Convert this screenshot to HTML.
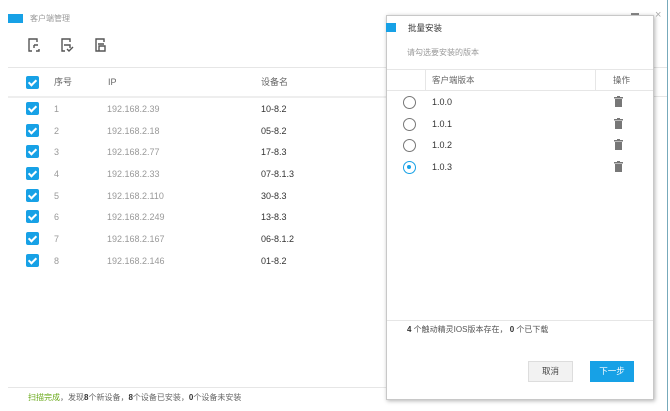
<!DOCTYPE html>
<html><head><meta charset="utf-8"><style>
*{margin:0;padding:0;box-sizing:border-box}
body{width:670px;height:411px;background:#fff;position:relative;overflow:hidden;font-family:"Liberation Sans","Noto Sans CJK SC",sans-serif;font-size:9px;color:#333}
.a{position:absolute;white-space:nowrap;line-height:12px}
.cb{position:absolute;left:26px;width:13px;height:13px;background:#17a1e6;border-radius:2px}
.cb:after{content:"";position:absolute;left:4px;top:2px;width:3px;height:6px;border:solid #fff;border-width:0 2px 2px 0;transform:rotate(45deg)}
.g{color:#999}
.hl{position:absolute;height:1px;background:#e6e6e6}
.rd{position:absolute;left:403px;width:13px;height:13px;border:1.5px solid #777;border-radius:50%}
.tr{position:absolute;left:614px;width:9px;height:11px}
</style></head><body>
<div style="position:absolute;left:8px;top:14px;width:15px;height:9px;background:#17a1e6"></div>
<div class="a g" style="left:30px;top:13px;font-size:8px">客户端管理</div>
<svg class="a" style="left:27px;top:37px" width="90" height="16" viewBox="0 0 90 16" fill="none" stroke="#555" stroke-width="1.4">
<path d="M5 14H2V2h8v3M7 8h4M7 8v3M12 12v2H9"/>
<path d="M38 14h-3V2h8v3M37 8h6v3M40 12l2 2 4-4"/>
<path d="M72 14h-3V2h8v3M71 7h6M72 9h6v5h-6z"/>
</svg>
<div class="hl" style="left:8px;top:67px;width:378px"></div>
<div class="cb" style="top:76px"></div>
<div class="a" style="left:54px;top:76px;color:#666">序号</div>
<div class="a" style="left:108px;top:76px;color:#666">IP</div>
<div class="a" style="left:261px;top:76px;color:#666">设备名</div>
<div class="hl" style="left:8px;top:96px;width:378px;background:#eee;height:2px"></div>

<div class="cb" style="top:102px"></div><div class="a g" style="left:54px;top:103px">1</div><div class="a g" style="left:107px;top:103px">192.168.2.39</div><div class="a" style="left:261px;top:103px">10-8.2</div>
<div class="cb" style="top:124px"></div><div class="a g" style="left:54px;top:125px">2</div><div class="a g" style="left:107px;top:125px">192.168.2.18</div><div class="a" style="left:261px;top:125px">05-8.2</div>
<div class="cb" style="top:145px"></div><div class="a g" style="left:54px;top:146px">3</div><div class="a g" style="left:107px;top:146px">192.168.2.77</div><div class="a" style="left:261px;top:146px">17-8.3</div>
<div class="cb" style="top:167px"></div><div class="a g" style="left:54px;top:168px">4</div><div class="a g" style="left:107px;top:168px">192.168.2.33</div><div class="a" style="left:261px;top:168px">07-8.1.3</div>
<div class="cb" style="top:189px"></div><div class="a g" style="left:54px;top:190px">5</div><div class="a g" style="left:107px;top:190px">192.168.2.110</div><div class="a" style="left:261px;top:190px">30-8.3</div>
<div class="cb" style="top:210px"></div><div class="a g" style="left:54px;top:211px">6</div><div class="a g" style="left:107px;top:211px">192.168.2.249</div><div class="a" style="left:261px;top:211px">13-8.3</div>
<div class="cb" style="top:232px"></div><div class="a g" style="left:54px;top:233px">7</div><div class="a g" style="left:107px;top:233px">192.168.2.167</div><div class="a" style="left:261px;top:233px">06-8.1.2</div>
<div class="cb" style="top:254px"></div><div class="a g" style="left:54px;top:255px">8</div><div class="a g" style="left:107px;top:255px">192.168.2.146</div><div class="a" style="left:261px;top:255px">01-8.2</div>

<div class="hl" style="left:8px;top:387px;width:378px"></div>
<div class="a" style="left:28px;top:392px;font-size:8px;color:#666"><span style="color:#6aaa1a">扫描完成</span>，发现<b style="color:#333">8</b>个新设备，<b style="color:#333">8</b>个设备已安装，<b style="color:#333">0</b>个设备未安装</div>

<div style="position:absolute;left:631px;top:13px;width:8px;height:2px;background:#888"></div>
<div class="a" style="left:655px;top:9px;font-size:11px;color:#aaa">×</div>
<div style="position:absolute;left:667px;top:0;width:1px;height:411px;background:#7ab"></div>
<div class="hl" style="left:653px;top:67px;width:14px"></div>
<div class="hl" style="left:653px;top:96px;width:14px"></div>

<div style="position:absolute;left:386px;top:15px;width:268px;height:385px;background:#fff;border:1px solid #c8c8c8;box-shadow:1px 1px 4px rgba(0,0,0,.3)"></div>
<div style="position:absolute;left:386px;top:23px;width:10px;height:9px;background:#17a1e6"></div>
<div class="a" style="left:408px;top:22px;font-size:8.5px;color:#333">批量安装</div>
<div class="a g" style="left:407px;top:47px;font-size:8px">请勾选要安装的版本</div>
<div class="hl" style="left:387px;top:69px;width:266px"></div>
<div style="position:absolute;left:425px;top:70px;width:1px;height:20px;background:#e6e6e6"></div>
<div style="position:absolute;left:595px;top:70px;width:1px;height:20px;background:#e6e6e6"></div>
<div class="a" style="left:432px;top:74px;font-size:8.5px;color:#666">客户端版本</div>
<div class="a" style="left:613px;top:74px;font-size:8.5px;color:#666">操作</div>
<div class="hl" style="left:387px;top:90px;width:266px"></div>

<div class="rd" style="top:96px"></div><div class="a" style="left:432px;top:96px">1.0.0</div>
<div class="rd" style="top:118px"></div><div class="a" style="left:432px;top:118px">1.0.1</div>
<div class="rd" style="top:139px"></div><div class="a" style="left:432px;top:139px">1.0.2</div>
<div class="rd" style="top:161px;border-color:#17a1e6"><div style="position:absolute;left:3px;top:3px;width:4px;height:4px;border-radius:50%;background:#17a1e6"></div></div><div class="a" style="left:432px;top:161px">1.0.3</div>
<svg class="tr" style="top:96px" viewBox="0 0 9 11"><path d="M3 0h3v1h3v1.5H0V1h3z M1 3h7v8H1z" fill="#777"/></svg>
<svg class="tr" style="top:118px" viewBox="0 0 9 11"><path d="M3 0h3v1h3v1.5H0V1h3z M1 3h7v8H1z" fill="#777"/></svg>
<svg class="tr" style="top:139px" viewBox="0 0 9 11"><path d="M3 0h3v1h3v1.5H0V1h3z M1 3h7v8H1z" fill="#777"/></svg>
<svg class="tr" style="top:161px" viewBox="0 0 9 11"><path d="M3 0h3v1h3v1.5H0V1h3z M1 3h7v8H1z" fill="#777"/></svg>

<div class="hl" style="left:387px;top:320px;width:266px"></div>
<div class="a" style="left:407px;top:324px;font-size:8px;color:#555"><b style="color:#333">4</b> 个触动精灵IOS版本存在， <b style="color:#333">0</b> 个已下载</div>
<div style="position:absolute;left:528px;top:361px;width:45px;height:21px;background:#f2f2f2;border:1px solid #ddd;font-size:8.5px;color:#444;text-align:center;line-height:19px">取消</div>
<div style="position:absolute;left:590px;top:361px;width:44px;height:21px;background:#17a1e6;font-size:8.5px;color:#fff;text-align:center;line-height:21px">下一步</div>
</body></html>
